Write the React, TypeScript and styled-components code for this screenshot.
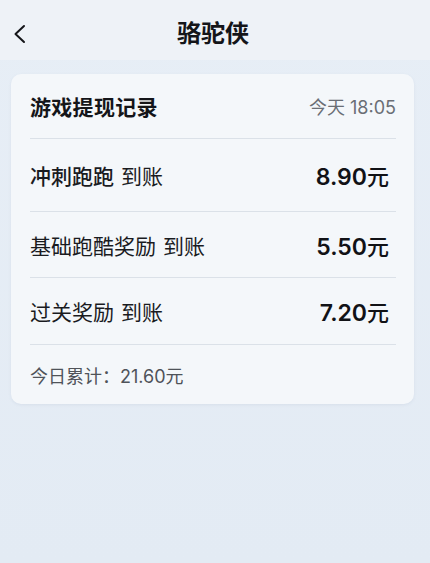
import React from "react";
import styled, { createGlobalStyle } from "styled-components";

const Global = createGlobalStyle`
  html, body { margin: 0; padding: 0; }
  body {
    background: #e6edf5;
    font-family: "Inter", "Noto Sans CJK SC", "Noto Sans", sans-serif;
    color: #141519;
  }
`;

const Page = styled.div`
  width: 430px;
  height: 563px;
  background: linear-gradient(180deg, #e7eef6 0%, #e3ebf4 100%);
  overflow: hidden;
`;

const Header = styled.header`
  height: 60px;
  background: #eef2f7;
  display: grid;
  grid-template-columns: 60px 1fr 60px;
  align-items: center;
`;

const Back = styled.button`
  border: 0;
  background: none;
  padding: 0 0 0 11px;
  margin-top: 8px;
  display: flex;
  align-items: center;
  color: #141519;
`;

const Title = styled.h1`
  margin: 3px 0 0;
  text-align: center;
  font-family: "Noto Sans CJK SC", sans-serif;
  font-size: 24px;
  font-weight: 700;
  line-height: 1;
  padding-right: 4px;
`;

const Card = styled.section`
  margin: 14px 16px 0 11px;
  background: #f4f7fa;
  border-radius: 10px;
  box-shadow: 0 1px 3px rgba(120, 140, 170, 0.12);
  padding: 0 18px 0 19px;
`;

const CardHead = styled.div`
  height: 64px;
  display: flex;
  align-items: center;
  justify-content: space-between;
  border-bottom: 1px solid #dbe1e8;
`;

const CardTitle = styled.h2`
  margin: 0;
  font-family: "Noto Sans CJK SC", sans-serif;
  font-size: 21px;
  font-weight: 700;
  letter-spacing: 0.3px;
`;

const Time = styled.span`
  font-size: 18px;
  color: #6a6e75;
`;

const Row = styled.div<{ $h: number }>`
  height: ${(p) => p.$h}px;
  display: flex;
  align-items: center;
  justify-content: space-between;
  border-bottom: 1px solid #dbe1e8;
  padding-right: 7px;
`;

const Label = styled.span`
  font-family: "Noto Sans CJK SC", sans-serif;
  font-size: 21px;
  color: #1a1b1f;
`;

const Name = styled.span<{ $bold?: boolean }>`
  font-weight: ${(p) => (p.$bold ? 500 : 400)};
  margin-right: 7px;
`;

const Amount = styled.span`
  font-size: 23px;
  font-weight: 600;
  color: #111216;
  & > small {
    font-size: 22px;
    font-weight: 500;
    font-family: "Noto Sans CJK SC", sans-serif;
  }
`;

const Footer = styled.div`
  height: 59px;
  display: flex;
  align-items: center;
  font-size: 18px;
  color: #4f5359;
`;

const rows = [
  { name: "冲刺跑跑", amt: "8.90", h: 72, bold: true },
  { name: "基础跑酷奖励", amt: "5.50", h: 65, bold: false },
  { name: "过关奖励", amt: "7.20", h: 66, bold: false },
];

export default function App() {
  return (
    <Page>
      <Global />
      <Header>
        <Back aria-label="返回">
          <svg width="20" height="20" viewBox="0 0 20 20" fill="none">
            <polyline
              points="13,2 4.5,10 13,18"
              stroke="#141519"
              strokeWidth="2"
              strokeLinecap="round"
              strokeLinejoin="round"
            />
          </svg>
        </Back>
        <Title>骆驼侠</Title>
        <span />
      </Header>
      <Card>
        <CardHead>
          <CardTitle>游戏提现记录</CardTitle>
          <Time>今天 18:05</Time>
        </CardHead>
        {rows.map((r) => (
          <Row key={r.name} $h={r.h}>
            <Label>
              <Name $bold={r.bold}>{r.name}</Name>到账
            </Label>
            <Amount>
              {r.amt}
              <small>元</small>
            </Amount>
          </Row>
        ))}
        <Footer>今日累计：21.60元</Footer>
      </Card>
    </Page>
  );
}
